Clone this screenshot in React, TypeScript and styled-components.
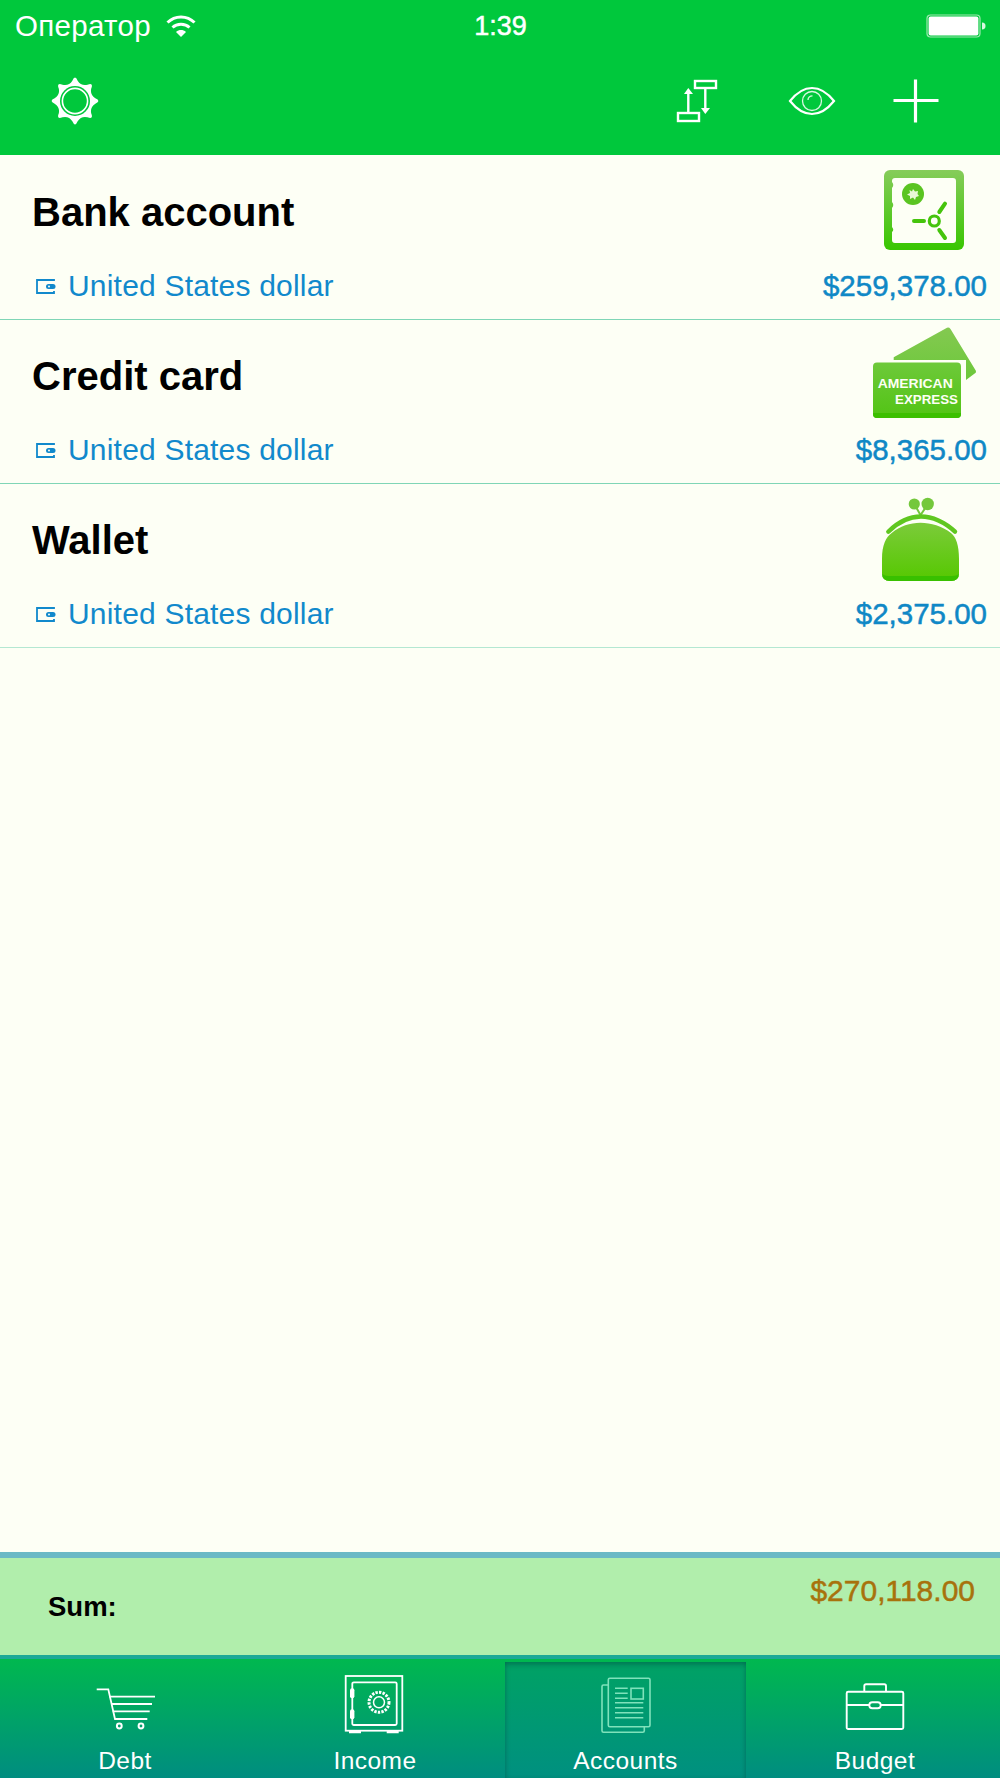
import React from "react";
import styled, { createGlobalStyle } from "styled-components";

const GlobalStyle = createGlobalStyle`
  html, body {
    margin: 0;
    padding: 0;
    background: #fdfff5;
    font-family: "Liberation Sans", Arial, sans-serif;
  }
`;

const Page = styled.div`
  width: 1000px;
  height: 1778px;
  display: flex;
  flex-direction: column;
  overflow: hidden;
`;

const Header = styled.header`
  background: #00c83c;
  height: 155px;
  flex: none;
  color: #fff;
  display: flex;
  flex-direction: column;
`;

const StatusBar = styled.div`
  height: 52px;
  padding: 0 14px 0 15px;
  display: flex;
  align-items: center;
  font-size: 29.5px;
`;

const StatusSide = styled.div<{ $end?: boolean }>`
  flex: 1;
  display: flex;
  align-items: center;
  gap: 15px;
  justify-content: ${(p) => (p.$end ? "flex-end" : "flex-start")};
`;

const Carrier = styled.span`
  letter-spacing: 0.3px;
`;

const Time = styled.span`
  font-size: 27px;
  -webkit-text-stroke: 0.5px #fff;
`;

const NavBar = styled.nav`
  flex: 1;
  display: flex;
  align-items: center;
  padding: 0 61px 6px 51px;
`;

const NavAction = styled.span<{ $left?: string }>`
  display: flex;
  margin-left: ${(p) => p.$left || "0"};
`;

const List = styled.main`
  flex: 1;
  background: #fdfff5;
  padding-top: 1px;
  display: flex;
  flex-direction: column;
`;

const Row = styled.section<{ $soft?: boolean }>`
  height: 164px;
  box-sizing: border-box;
  flex: none;
  padding: 0 13px 0 32px;
  border-bottom: 1.5px solid ${(p) => (p.$soft ? "#b4e8d2" : "#7fd6b6")};
  display: flex;
  flex-direction: column;
`;

const RowTop = styled.div`
  height: 107px;
  display: flex;
  align-items: center;
  justify-content: space-between;
`;

const Title = styled.h2`
  margin: 5px 0 0;
  font-size: 40px;
  line-height: 48px;
  font-weight: 700;
  color: #000;
`;

const RowIcon = styled.svg`
  display: block;
  width: 110px;
  height: 100px;
  margin-right: 8px;
`;

const RowBottom = styled.div`
  display: flex;
  align-items: center;
  justify-content: space-between;
  height: 40px;
  margin-top: 3px;
`;

const Currency = styled.div`
  display: flex;
  align-items: center;
  gap: 12px;
  padding-left: 4px;
  font-size: 30px;
  letter-spacing: 0.2px;
  color: #1189cc;
`;

const Amount = styled.div`
  font-size: 29.5px;
  color: #0f88c6;
  -webkit-text-stroke: 0.5px #0f88c6;
`;

const SumBar = styled.section`
  flex: none;
  height: 107px;
  box-sizing: border-box;
  background: #b1eeac;
  border-top: 6px solid #6bb9c5;
  border-bottom: 4px solid #1ca997;
  padding: 16px 25px 0 48px;
  display: flex;
  justify-content: space-between;
  align-items: flex-start;
`;

const SumLabel = styled.span`
  margin-top: 17px;
  font-size: 27.5px;
  line-height: 32px;
  font-weight: 700;
  color: #000;
`;

const SumValue = styled.span`
  font-size: 30px;
  line-height: 34px;
  color: #a8720c;
  -webkit-text-stroke: 0.5px #a8720c;
`;

const TabBar = styled.footer`
  flex: none;
  height: 119px;
  box-sizing: border-box;
  padding-top: 3px;
  background: linear-gradient(#00b84f, #008d80);
  display: grid;
  grid-template-columns: repeat(4, 1fr);
`;

const Tab = styled.div<{ $active?: boolean }>`
  display: flex;
  flex-direction: column;
  align-items: center;
  padding-top: 13px;
  margin: ${(p) => (p.$active ? "0 4px 0 5px" : "0")};
  background: ${(p) => (p.$active ? "linear-gradient(#00a264, #009080)" : "transparent")};
  box-shadow: ${(p) =>
    p.$active ? "inset 0 5px 5px -2px rgba(0, 80, 70, 0.45), inset 3px 0 4px -2px rgba(0, 80, 70, 0.3), inset -3px 0 4px -2px rgba(0, 80, 70, 0.3)" : "none"};
`;

const TabIcon = styled.svg`
  display: block;
  width: 64px;
  height: 60px;
`;

const TabLabel = styled.span`
  margin-top: 11px;
  font-size: 24.5px;
  line-height: 30px;
  letter-spacing: 0.45px;
  color: #fff;
`;

// scalloped gear outline, 8 bumps
const gearOutline = () => {
  const pts: string[] = [];
  const cx = 24;
  const cy = 24;
  for (let i = 0; i < 8; i++) {
    const a = (i * Math.PI) / 4 - Math.PI / 2;
    const b = a + Math.PI / 8;
    const c = a + Math.PI / 4;
    const p = (ang: number, r: number) =>
      `${(cx + Math.cos(ang) * r).toFixed(2)} ${(cy + Math.sin(ang) * r).toFixed(2)}`;
    if (i === 0) pts.push(`M${p(a - 0.13, 20.5)}`);
    pts.push(`Q${p(a, 26.5)} ${p(a + 0.13, 20.5)}`);
    pts.push(`Q${p(b, 16)} ${p(c - 0.13, 20.5)}`);
  }
  return pts.join(" ") + "Z";
};

const GearIcon = () => (
  <svg width="48" height="48" viewBox="0 0 48 48">
    <path d={gearOutline()} fill="#fff" />
    <circle cx="24" cy="24" r="15" fill="#00c83c" />
    <circle cx="24" cy="24" r="12.6" fill="none" stroke="#fff" strokeWidth="1.6" />
  </svg>
);

const SortIcon = () => (
  <svg width="44" height="44" viewBox="0 0 44 44" fill="none" stroke="#fff" strokeWidth="2.4">
    <rect x="20" y="2" width="21" height="7" />
    <path d="M30.3 9V30" />
    <path d="M26 29H35L30.3 35Z" fill="#fff" stroke="none" />
    <rect x="3" y="34" width="21" height="8" />
    <path d="M13.3 15V34" />
    <path d="M9 15H18L13.3 9Z" fill="#fff" stroke="none" />
  </svg>
);

const EyeIcon = () => (
  <svg width="48" height="30" viewBox="0 0 48 30" fill="none" stroke="#fff">
    <path d="M2 15C10 5 17 2 24 2S38 5 46 15C38 25 31 28 24 28S10 25 2 15Z" strokeWidth="2.2" />
    <circle cx="24" cy="15" r="9.5" strokeWidth="1.3" opacity="0.85" />
    <path d="M20 14C20 11.5 22 9.8 24.5 9.8" strokeWidth="1.3" opacity="0.85" />
  </svg>
);

const PlusIcon = () => (
  <svg width="46" height="44" viewBox="0 0 46 44" fill="none" stroke="#fff" strokeWidth="3.2">
    <path d="M0.5 21.5H45.5M22.5 0.5V43.5" />
  </svg>
);

const WifiIcon = () => (
  <svg width="30" height="24" viewBox="0 0 30 24" fill="none" stroke="#fff" strokeWidth="3">
    <path d="M1.5 8.5C9 1 21 1 28.5 8.5" />
    <path d="M6.5 13.5C11 9.2 19 9.2 23.5 13.5" />
    <path d="M10 18L15 23L20 18C17 15.4 13 15.4 10 18Z" fill="#fff" stroke="none" />
  </svg>
);

const BatteryIcon = () => (
  <svg width="60" height="24" viewBox="0 0 60 24">
    <rect x="1" y="1" width="53" height="22" rx="3.5" fill="none" stroke="#9fe8b0" strokeWidth="1.2" />
    <rect x="2.6" y="2.6" width="49.8" height="18.8" rx="2" fill="#fff" />
    <path d="M56 8.5C58.5 8.5 59.5 10 59.5 12S58.5 15.5 56 15.5Z" fill="#d8f8e0" />
  </svg>
);

const WalletMark = () => (
  <svg width="20" height="15" viewBox="0 0 20 15" fill="none" stroke="#1189cc" strokeWidth="1.8">
    <path d="M18 2V1H1V14H18V12" />
    <rect x="10" y="5" width="9.5" height="5" rx="2.5" fill="#1189cc" stroke="none" />
    <circle cx="13" cy="7.5" r="1" fill="#fdfff5" stroke="none" />
  </svg>
);

const SafeArt = () => (
  <RowIcon viewBox="-15 -10 110 100">
    <defs>
      <linearGradient id="safeFill" x1="0" y1="0" x2="0" y2="1">
        <stop offset="0" stopColor="#86cc5a" />
        <stop offset="1" stopColor="#38c600" />
      </linearGradient>
    </defs>
    <rect x="0" y="0" width="80" height="80" rx="6" fill="url(#safeFill)" />
    <path d="M8 11Q8 8 11 8H69Q72 8 72 11V70Q72 73 69 73H11Q8 73 8 70V62Q10.5 60 8 57V38Q10.5 35 8 32V18Q10.5 15 8 12Z" fill="#fdfff5" />
    <circle cx="29" cy="24" r="11" fill="#5ac421" />
    <path d="M29 19L31 21.5L34 21L33.5 24L35 26L32 27L31 30L29 27.5L26 29L26 26L23 24.5L26 23L25.5 20L28 21.5Z" fill="#e8f8d8" />
    <circle cx="50.3" cy="51" r="5" fill="none" stroke="#45c40c" strokeWidth="3.2" />
    <path d="M30 51H40M55.3 42L61 33.7M55.3 60L61 68" fill="none" stroke="#45c40c" strokeWidth="4" strokeLinecap="round" />
  </RowIcon>
);

const CardArt = () => (
  <RowIcon viewBox="0 0 110 100">
    <defs>
      <linearGradient id="cardBack" x1="0" y1="0" x2="0" y2="1">
        <stop offset="0" stopColor="#84c951" />
        <stop offset="1" stopColor="#6cc83a" />
      </linearGradient>
      <linearGradient id="cardFront" x1="0" y1="0" x2="0" y2="1">
        <stop offset="0" stopColor="#6ec93a" />
        <stop offset="1" stopColor="#52c414" />
      </linearGradient>
    </defs>
    <path d="M24.7 33.3L78 3.8Q80 3 81.5 5L107 47Q107.5 49 105 50L97 56V36H24.7Z" fill="url(#cardBack)" />
    <rect x="2.5" y="37" width="91" height="58" rx="4" fill="#fdfff5" />
    <rect x="4" y="38.5" width="88" height="55.5" rx="4" fill="url(#cardFront)" />
    <path d="M4 89H92V90Q92 94 88 94H8Q4 94 4 90Z" fill="#3cbf00" />
    <text x="8.7" y="64" fontFamily="Liberation Sans" fontWeight="700" fontSize="12.5" fill="#fdfff5" textLength="75" lengthAdjust="spacingAndGlyphs">AMERICAN</text>
    <text x="26" y="80" fontFamily="Liberation Sans" fontWeight="700" fontSize="12.5" fill="#fdfff5" textLength="63" lengthAdjust="spacingAndGlyphs">EXPRESS</text>
  </RowIcon>
);

const PurseArt = () => (
  <RowIcon viewBox="-11 -7 110 100">
    <defs>
      <linearGradient id="purseFill" x1="0" y1="0" x2="0" y2="1">
        <stop offset="0" stopColor="#7ccb3a" />
        <stop offset="1" stopColor="#55c800" />
      </linearGradient>
    </defs>
    <circle cx="34.3" cy="9" r="5.6" fill="#74c83c" />
    <circle cx="47.7" cy="9" r="6.2" fill="#74c83c" />
    <path d="M36 12L40.5 20L46 12" fill="none" stroke="#74c83c" strokeWidth="2" />
    <path d="M8.3 36.7C18 27 30 21.5 41 21.5S65 27 75 36.7" fill="none" stroke="#5fc71f" strokeWidth="4.4" strokeLinecap="round" />
    <path d="M2 64C2 50 6 42 11.7 38C20 31 30 27.7 40.5 27.7S62 31 71 38C76 42 79 50 79 64V78Q79 86 71 86H10Q2 86 2 78Z" fill="url(#purseFill)" />
    <path d="M2 78Q2 86 10 86H71Q79 86 79 78Q78 81 72 81H9Q3 81 2 78Z" fill="#38c000" />
  </RowIcon>
);

const CartGlyph = () => (
  <TabIcon viewBox="-2 -11 64 60" fill="none" stroke="#fff" strokeWidth="1.8">
    <path d="M1.7 3.3H13.3L20 33H52.3" />
    <path d="M14.3 10.7H60M16 18H57M17.7 25.3H54.7" />
    <circle cx="24.3" cy="40" r="2.4" strokeWidth="2" />
    <circle cx="46" cy="40" r="2.4" strokeWidth="2" />
  </TabIcon>
);

const SafeGlyph = () => (
  <TabIcon viewBox="-1 0 64 60" fill="none" stroke="#fff" strokeWidth="1.8">
    <rect x="1.7" y="1" width="56.6" height="54.7" />
    <rect x="8.3" y="7.3" width="44.4" height="42.7" rx="1.5" />
    <rect x="6" y="13.3" width="4.4" height="10" rx="2" fill="#fff" stroke="none" />
    <rect x="6" y="34.3" width="4.4" height="10" rx="2" fill="#fff" stroke="none" />
    <circle cx="35" cy="27.3" r="10" strokeWidth="3" strokeDasharray="2.4 1.2" />
    <circle cx="35" cy="27.3" r="5.5" strokeWidth="1.5" />
    <path d="M5 56.8H17M42.7 56.8H54.7" strokeWidth="3" />
  </TabIcon>
);

const NewsGlyph = () => (
  <TabIcon viewBox="-5 -1 64 60" fill="none" stroke="#7fe2bb" strokeWidth="1.6">
    <rect x="9.3" y="2.3" width="41.7" height="48.4" rx="1.5" />
    <path d="M9.3 9H4.5Q3 9 3 10.5V54.8Q3 56.3 4.5 56.3H43.8Q45.3 56.3 45.3 54.8V50.7" />
    <path d="M16 12.3H28.7M16 17.3H28.7M16 22.3H28.7" />
    <rect x="32" y="12.3" width="12.3" height="10.7" />
    <path d="M16 26.7H44.3M16 31.7H44.3M16 36.7H44.3M16 41.7H44.3" />
  </TabIcon>
);

const CaseGlyph = () => (
  <TabIcon viewBox="-2 -8 64 60" fill="none" stroke="#fff" strokeWidth="1.9">
    <rect x="1.7" y="8.7" width="56.6" height="37.3" rx="1.5" />
    <path d="M19.3 8.7V3Q19.3 1.3 21 1.3H39.3Q41 1.3 41 3V8.7" />
    <path d="M1.7 22H24.3M35.7 22H58.3" />
    <rect x="24.3" y="19.3" width="11.4" height="6" rx="3" />
  </TabIcon>
);

interface Account {
  name: string;
  amount: string;
  art: React.ReactNode;
  soft?: boolean;
}

const accounts: Account[] = [
  { name: "Bank account", amount: "$259,378.00", art: <SafeArt /> },
  { name: "Credit card", amount: "$8,365.00", art: <CardArt /> },
  { name: "Wallet", amount: "$2,375.00", art: <PurseArt />, soft: true },
];

export default function App() {
  return (
    <Page>
      <GlobalStyle />
      <Header>
        <StatusBar>
          <StatusSide>
            <Carrier>Оператор</Carrier>
            <WifiIcon />
          </StatusSide>
          <Time>1:39</Time>
          <StatusSide $end>
            <BatteryIcon />
          </StatusSide>
        </StatusBar>
        <NavBar>
          <GearIcon />
          <NavAction $left="auto">
            <SortIcon />
          </NavAction>
          <NavAction $left="69px">
            <EyeIcon />
          </NavAction>
          <NavAction $left="57px">
            <PlusIcon />
          </NavAction>
        </NavBar>
      </Header>
      <List>
        {accounts.map((a) => (
          <Row key={a.name} $soft={a.soft}>
            <RowTop>
              <Title>{a.name}</Title>
              {a.art}
            </RowTop>
            <RowBottom>
              <Currency>
                <WalletMark />
                United States dollar
              </Currency>
              <Amount>{a.amount}</Amount>
            </RowBottom>
          </Row>
        ))}
      </List>
      <SumBar>
        <SumLabel>Sum:</SumLabel>
        <SumValue>$270,118.00</SumValue>
      </SumBar>
      <TabBar>
        <Tab>
          <CartGlyph />
          <TabLabel>Debt</TabLabel>
        </Tab>
        <Tab>
          <SafeGlyph />
          <TabLabel>Income</TabLabel>
        </Tab>
        <Tab $active>
          <NewsGlyph />
          <TabLabel>Accounts</TabLabel>
        </Tab>
        <Tab>
          <CaseGlyph />
          <TabLabel>Budget</TabLabel>
        </Tab>
      </TabBar>
    </Page>
  );
}
